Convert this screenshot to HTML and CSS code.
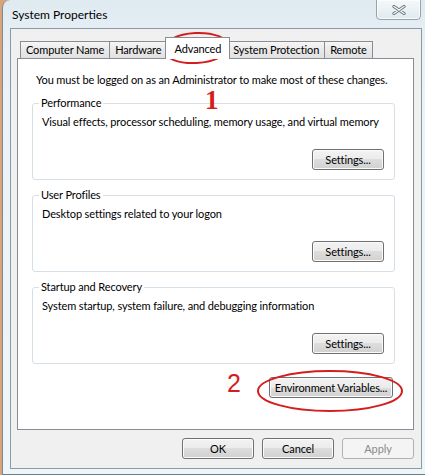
FILE: index.html
```html
<!DOCTYPE html>
<html lang="en">
<head>
    <meta charset="UTF-8">
    <meta name="viewport" content="width=device-width, initial-scale=1.0">
    <title>System Properties</title>
    <link rel="stylesheet" href="styles.css">
</head>
<body>
    <div class="window">
        <div class="titlebar">
            <span class="title">System Properties</span>
            <button class="close-btn" title="Close">
                <svg width="14" height="10" viewBox="0 0 14 10">
                    <path d="M2 1.5 L12 8.5 M12 1.5 L2 8.5" stroke="#6d7780" stroke-width="3.2" stroke-linecap="round"/>
                    <path d="M2 1.5 L12 8.5 M12 1.5 L2 8.5" stroke="#f4f7f9" stroke-width="1.4" stroke-linecap="round"/>
                </svg>
            </button>
        </div>

        <div class="client">
            <div class="tabs">
                <div class="tab">Computer Name</div>
                <div class="tab">Hardware</div>
                <div class="tab active">Advanced</div>
                <div class="tab">System Protection</div>
                <div class="tab">Remote</div>
            </div>

            <div class="panel">
                <p class="note">You must be logged on as an Administrator to make most of these changes.</p>

                <fieldset class="group">
                    <legend>Performance</legend>
                    <p>Visual effects, processor scheduling, memory usage, and virtual memory</p>
                    <div class="group-actions"><button class="btn">Settings...</button></div>
                </fieldset>

                <fieldset class="group">
                    <legend>User Profiles</legend>
                    <p>Desktop settings related to your logon</p>
                    <div class="group-actions"><button class="btn">Settings...</button></div>
                </fieldset>

                <fieldset class="group">
                    <legend>Startup and Recovery</legend>
                    <p>System startup, system failure, and debugging information</p>
                    <div class="group-actions"><button class="btn">Settings...</button></div>
                </fieldset>

                <div class="panel-actions">
                    <button class="btn btn-wide">Environment Variables...</button>
                </div>
            </div>

            <div class="dialog-actions">
                <button class="btn">OK</button>
                <button class="btn">Cancel</button>
                <button class="btn" disabled>Apply</button>
            </div>
        </div>
    </div>

    <!-- red hand-drawn notes on top of the screenshot -->
    <svg class="markup" width="425" height="475" viewBox="0 0 425 475">
        <ellipse cx="196" cy="48" rx="33" ry="15" transform="rotate(-3 196 48)"/>
        <ellipse cx="330" cy="391" rx="72" ry="20"/>
    </svg>
    <span class="mark mark-one">1</span>
    <span class="mark mark-two">2</span>
</body>
</html>
```

FILE: styles.css
```css
body {
    margin: 0;
    position: relative;
    width: 425px;
    height: 475px;
    overflow: hidden;
    background: #d9a37c;
    font-family: 'Lato', 'Liberation Sans', sans-serif;
    font-size: 11px;
    letter-spacing: -0.12px;
    color: #000;
}
p {
    margin: 0;
}
.window {
    margin-left: 2px;
    width: 426px;
    box-sizing: border-box;
    padding: 0 6px 5px 7px;
    border-left: 1px solid #7d8a94;
    border-bottom: 1px solid #6f7c86;
    border-top-left-radius: 8px;
    background: linear-gradient(#dfeaf1, #e9f3f7 60px, #edf7f9);
}
.titlebar {
    height: 28px;
    display: flex;
    justify-content: space-between;
    align-items: flex-start;
}
.title {
    margin: 7px 0 0 2px;
    line-height: 16px;
    font-size: 12px;
    letter-spacing: 0;
}
.close-btn {
    width: 45px;
    height: 21px;
    margin: -1px 1px 0 0;
    padding: 0;
    border: 1px solid #98a2ab;
    border-radius: 0 0 4px 4px;
    background: linear-gradient(#f4f8fa, #e2eaef);
    box-shadow: inset 0 0 0 1px rgba(255, 255, 255, 0.7);
    display: flex;
    align-items: center;
    justify-content: center;
}
.client {
    height: 441px;
    box-sizing: border-box;
    border: 1px solid #8c99a3;
    background: #f0f0f0;
    padding: 8px 7px 0 6px;
}
.tabs {
    display: flex;
    align-items: flex-end;
    margin: 0 0 -1px 3px;
    position: relative;
    z-index: 1;
}
.tab {
    height: 16px;
    line-height: 16px;
    padding: 0 5px;
    border: 1px solid #898c95;
    background: linear-gradient(#f6f6f6, #e9e9e9 50%, #e1e1e1);
    white-space: nowrap;
}
.tab + .tab {
    margin-left: -1px;
}
.tab.active {
    height: 21px;
    line-height: 21px;
    padding: 0 8px;
    margin: 0 -2px;
    border-bottom: none;
    background: #fff;
    position: relative;
    z-index: 2;
}
.panel {
    height: 372px;
    box-sizing: border-box;
    border: 1px solid #898c95;
    background: #fff;
    padding: 13px 18px 0 14px;
}
.note {
    line-height: 16px;
    margin: 0 0 7px 4px;
    white-space: nowrap;
}
.group {
    margin: 0 0 7px;
    padding: 0 10px 9px 7px;
    border: 1px solid #d5dfe5;
    border-radius: 3px;
    min-width: 0;
}
.group legend {
    padding: 0 2px;
    margin-left: -1px;
    line-height: 16px;
}
.group p {
    margin: 3px 0 0 2px;
    line-height: 16px;
    white-space: nowrap;
}
.group-actions {
    margin-top: 19px;
    display: flex;
    justify-content: flex-end;
}
.panel-actions {
    margin: 13px 2px 0 0;
    display: flex;
    justify-content: flex-end;
}
.dialog-actions {
    margin-top: 8px;
    display: flex;
    justify-content: flex-end;
    gap: 8px;
}
.btn {
    width: 72px;
    height: 21px;
    padding: 0;
    border: 1px solid #707070;
    border-radius: 3px;
    background: linear-gradient(#f3f3f3, #ebebeb 50%, #dddddd 50%, #d1d1d1);
    box-shadow: inset 0 0 0 1px #fbfbfb;
    font-family: inherit;
    font-size: 11px;
    letter-spacing: inherit;
    color: #000;
}
.btn-wide {
    width: 124px;
}
.btn:disabled {
    border-color: #adb2b5;
    background: #f4f4f4;
    box-shadow: none;
    color: #8a8a8a;
}
.markup {
    position: absolute;
    left: 0;
    top: 0;
    pointer-events: none;
}
.markup ellipse {
    fill: none;
    stroke: #d41e1e;
    stroke-width: 2;
}
.mark {
    position: absolute;
    color: #d41e1e;
    letter-spacing: 0;
}
.mark-one {
    left: 205px;
    top: 87px;
    font: bold 27px/27px 'Liberation Serif', serif;
}
.mark-two {
    left: 227px;
    top: 371px;
    font: 25px/25px 'Liberation Sans', sans-serif;
}
```
